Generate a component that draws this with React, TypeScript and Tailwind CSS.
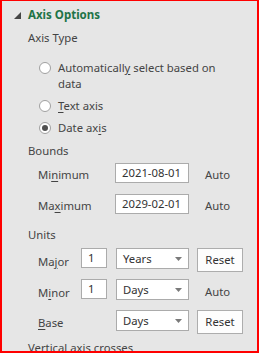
import React from 'react';

const font = { fontFamily: '"Noto Sans", "Open Sans", sans-serif' };

// label with an underlined access key
const Key = ({ text, at }: { text: string; at: number }) => (
    <span>
        {text.slice(0, at)}
        <span className="underline underline-offset-2">{text[at]}</span>
        {text.slice(at + 1)}
    </span>
);

const Radio = ({ checked }: { checked?: boolean }) => (
    <span className="w-[12px] h-[12px] shrink-0 rounded-full border border-[#a0a0a0] bg-white flex items-center justify-center">
        {checked && <span className="w-[6px] h-[6px] rounded-full bg-[#505050]" />}
    </span>
);

const TextBox = ({ value, className }: { value: string; className: string }) => (
    <div className={`h-[20px] border border-[#ababab] bg-white flex items-center pl-[6px] text-[#333] ${className}`}>
        {value}
    </div>
);

const Select = ({ value }: { value: string }) => (
    <div className="w-[73px] h-[21px] border border-[#ababab] bg-white flex items-center justify-between pl-[6px] pr-[6px] text-[#333]">
        <span>{value}</span>
        <svg width="7" height="4" viewBox="0 0 7 4">
            <polygon points="0,0 7,0 3.5,4" fill="#7a7a7a" />
        </svg>
    </div>
);

const ResetButton = () => (
    <div className="w-[46px] h-[24px] border border-[#adadad] bg-[#fdfdfd] flex items-center justify-center text-[#333]">
        Reset
    </div>
);

export default function App() {
    return (
        <div
            className="w-[259px] h-[353px] overflow-hidden bg-[#e6e6e6] border-t border-l-2 border-r-2 border-b-2 border-[#ff0000] text-[11.3px] text-[#444] leading-4"
            style={font}
        >
            <div className="h-[28px] flex items-center pl-[12px]">
                <svg width="7" height="7" viewBox="0 0 7 7" className="mr-[7px]">
                    <polygon points="7,0 7,7 0,7" fill="#454545" />
                </svg>
                <span className="font-bold text-[#217346] text-[11.5px]">Axis Options</span>
            </div>

            <div className="h-[18px] flex items-center pl-[26px]">Axis Type</div>

            <div className="mt-[13px] flex items-start pl-[37px]">
                <span className="mt-[2px]"><Radio /></span>
                <span className="ml-[7px] w-[170px]">
                    Automaticall<span className="underline underline-offset-2">y</span> select based on
                    <br />
                    data
                </span>
            </div>
            <div className="mt-[3px] h-[22px] flex items-center pl-[37px]">
                <Radio />
                <span className="ml-[7px]"><Key text="Text axis" at={0} /></span>
            </div>
            <div className="h-[22px] flex items-center pl-[37px]">
                <Radio checked />
                <span className="ml-[7px]"><Key text="Date axis" at={7} /></span>
            </div>

            <div className="mt-[3px] h-[18px] flex items-center pl-[26px]">Bounds</div>

            <div className="mt-[3px] h-[20px] flex items-center pl-[36px]">
                <span className="w-[77px] pt-[3px]"><Key text="Minimum" at={2} /></span>
                <TextBox value="2021-08-01" className="w-[74px]" />
                <span className="ml-[16px] pt-[3px]">Auto</span>
            </div>
            <div className="mt-[11px] h-[20px] flex items-center pl-[36px]">
                <span className="w-[77px] pt-[3px]"><Key text="Maximum" at={2} /></span>
                <TextBox value="2029-02-01" className="w-[74px]" />
                <span className="ml-[16px] pt-[3px]">Auto</span>
            </div>

            <div className="mt-[12px] h-[18px] flex items-center pl-[26px]">Units</div>

            <div className="mt-[4px] h-[24px] flex items-start pl-[36px]">
                <span className="w-[43px] pt-[6px]"><Key text="Major" at={2} /></span>
                <TextBox value="1" className="w-[26px]" />
                <span className="ml-[9px]"><Select value="Years" /></span>
                <span className="ml-[8px]"><ResetButton /></span>
            </div>
            <div className="mt-[7px] h-[24px] flex items-start pl-[36px]">
                <span className="w-[43px] pt-[6px]"><Key text="Minor" at={1} /></span>
                <TextBox value="1" className="w-[26px]" />
                <span className="ml-[9px]"><Select value="Days" /></span>
                <span className="ml-[16px] pt-[5px]">Auto</span>
            </div>
            <div className="mt-[7px] h-[24px] flex items-start pl-[36px]">
                <span className="w-[78px] pt-[5px]"><Key text="Base" at={0} /></span>
                <Select value="Days" />
                <span className="ml-[8px]"><ResetButton /></span>
            </div>

            <div className="mt-[5px] h-[18px] flex items-center pl-[26px] whitespace-nowrap">Vertical axis crosses</div>
        </div>
    );
}
